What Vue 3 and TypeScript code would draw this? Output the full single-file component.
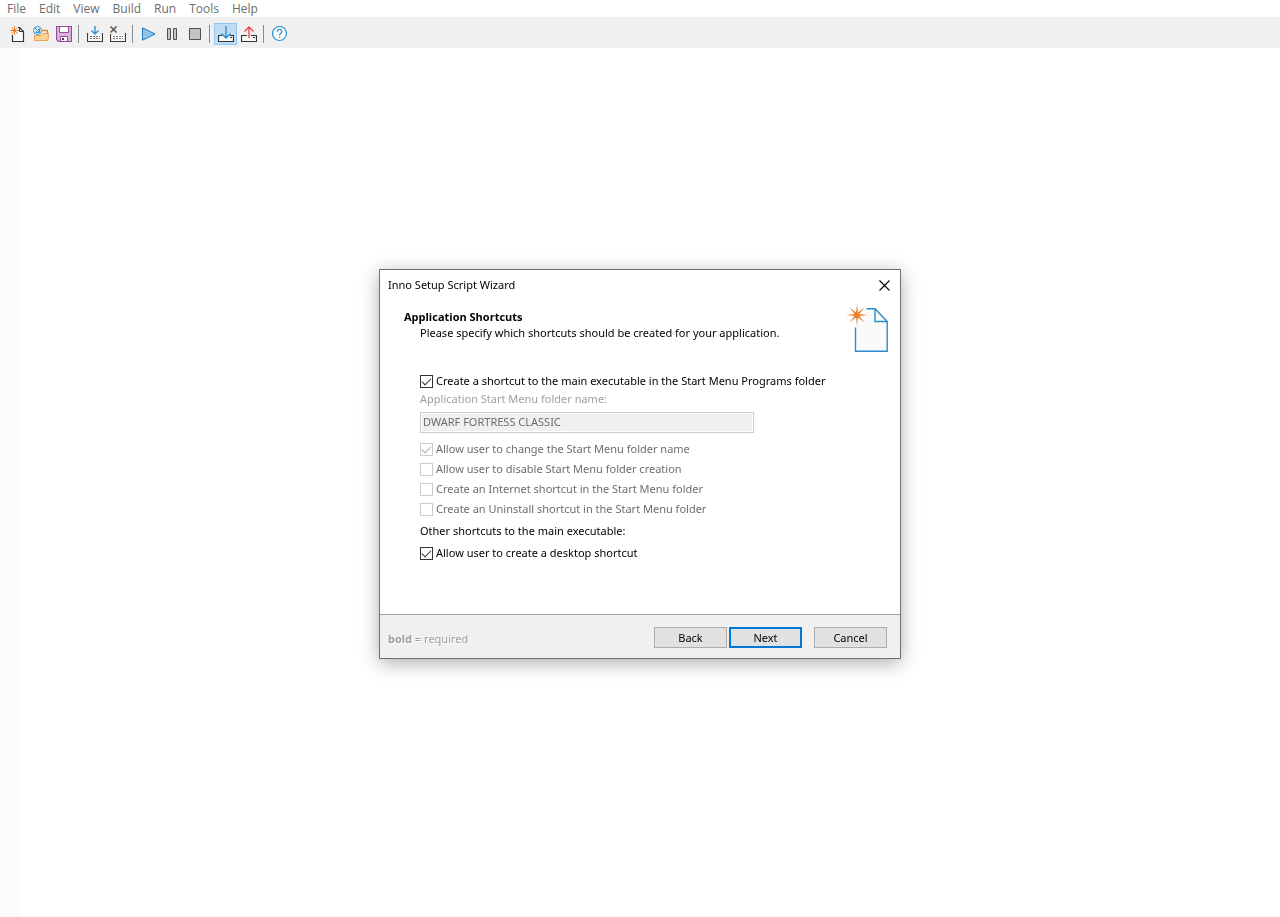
<script setup lang="ts">
import { ref } from 'vue'

const menus: string[] = ['File', 'Edit', 'View', 'Build', 'Run', 'Tools', 'Help']

const createShortcut = ref<boolean>(true)
const folderName = ref<string>('DWARF FORTRESS CLASSIC')
const desktopShortcut = ref<boolean>(true)

interface Option {
  id: string
  label: string
  checked: boolean
}

const folderOptions = ref<Option[]>([
  { id: 'change-name', label: 'Allow user to change the Start Menu folder name', checked: true },
  { id: 'disable-folder', label: 'Allow user to disable Start Menu folder creation', checked: false },
  { id: 'internet', label: 'Create an Internet shortcut in the Start Menu folder', checked: false },
  { id: 'uninstall', label: 'Create an Uninstall shortcut in the Start Menu folder', checked: false },
])
</script>

<template>
  <div class="app">
    <nav class="menubar" aria-label="Main menu">
      <button v-for="m in menus" :key="m" type="button" class="menu">{{ m }}</button>
    </nav>

    <div class="toolbar" role="toolbar" aria-label="Tools">
      <button type="button" class="tool" aria-label="New">
        <svg viewBox="0 0 16 16">
          <path d="M3.5 8.500L7 8V1.500H10L13.500 5V15.500H3.500Z" fill="#fafafa" />
          <path d="M2.500 9V15.500H13.500V5.500L9.500 1.500H8" fill="none" stroke="#333" stroke-width="1.2" />
          <path d="M9.500 1.500V5.500H13.500" fill="none" stroke="#333" />
          <path d="M4.500 0V9M0 4.500H9M1.500 1.500L7.500 7.500M7.500 1.500L1.500 7.500" fill="none" stroke="#e8832f" />
          <circle cx="4.500" cy="4.500" r="1.6" fill="#e8832f" />
        </svg>
      </button>
      <button type="button" class="tool" aria-label="Open">
        <svg viewBox="0 0 16 16">
          <path d="M9 4.500H14.500V9" fill="none" stroke="#e58a33" stroke-width="1.3" />
          <path d="M1.500 9V14.500H15L15.500 7.500H9.500L8 9.500H1.500Z" fill="#fcd391" stroke="#eba34e" />
          <circle cx="4.500" cy="4.500" r="4" fill="#e9f3fa" stroke="#3c91c9" />
          <path d="M2 2L6.300 6.300M6.500 3V6.500H3M2.500 6.500L6.500 2.500" fill="none" stroke="#3c91c9" />
        </svg>
      </button>
      <button type="button" class="tool" aria-label="Save">
        <svg viewBox="0 0 16 16">
          <path d="M0.5 0.5H15.5V15.5H2.5L0.5 13.5Z" fill="#dcb5dc" stroke="#974a98" stroke-width="1.2" />
          <path d="M3.5 0.5H12.5V6.5H3.5Z" fill="#fafafa" stroke="#974a98" />
          <path d="M4.5 10.5H11.5V15.5H4.5Z" fill="#fafafa" stroke="#974a98" />
          <path d="M6 12H8V14H6Z" fill="#444" />
        </svg>
      </button>
      <span class="sep"></span>
      <button type="button" class="tool" aria-label="Compile">
        <svg viewBox="0 0 16 16">
          <path d="M1 8H15V15H1Z" fill="#fafafa" />
          <path d="M0.5 7V15.5H15.5V7" fill="none" stroke="#3a3a3a" stroke-width="1.2" />
          <path d="M3 10.5H13M3 12.5H13" stroke="#777" stroke-dasharray="2 1" />
          <path d="M8 0V8M4.5 4.5L8 8L11.5 4.5" fill="none" stroke="#3292d0" stroke-width="1.4" />
        </svg>
      </button>
      <button type="button" class="tool" aria-label="Stop compile">
        <svg viewBox="0 0 16 16">
          <path d="M1 9H15V15H1Z" fill="#fafafa" />
          <path d="M0.5 8V15.5H15.5V7" fill="none" stroke="#3a3a3a" stroke-width="1.2" />
          <path d="M3 10.5H13M3 12.5H13" stroke="#777" stroke-dasharray="2 1" />
          <path d="M0.500 0.500L6.500 6.500M6.500 0.500L0.500 6.500" stroke="#555" stroke-width="1.5" />
        </svg>
      </button>
      <span class="sep"></span>
      <button type="button" class="tool" aria-label="Run">
        <svg viewBox="0 0 16 16">
          <path d="M1.5 1.8L14 8L1.5 14.2Z" fill="#91c6ec" stroke="#1c79bd" />
        </svg>
      </button>
      <button type="button" class="tool" aria-label="Pause">
        <svg viewBox="0 0 16 16">
          <path d="M3.5 2.5H6.5V13.5H3.5ZM9.5 2.5H12.5V13.5H9.5Z" fill="#c4c4c4" stroke="#505050" />
        </svg>
      </button>
      <button type="button" class="tool" aria-label="Stop">
        <svg viewBox="0 0 16 16">
          <path d="M2.5 2.5H13.5V13.5H2.5Z" fill="#c2c2c2" stroke="#505050" />
        </svg>
      </button>
      <span class="sep"></span>
      <button type="button" class="tool active" aria-pressed="true" aria-label="Target setup">
        <svg viewBox="0 0 16 16">
          <path d="M1 10H15V15H1Z" fill="#fafafa" />
          <path d="M4 9.5H0.5V15.5H15.5V9.5H12" fill="none" stroke="#333" stroke-width="1.2" />
          <path d="M12 11.5H14" stroke="#333" />
          <path d="M8 0V12M3.5 7.5L8 12L12.5 7.5" fill="none" stroke="#2488cb" stroke-width="1.3" />
        </svg>
      </button>
      <button type="button" class="tool" aria-label="Target uninstall">
        <svg viewBox="0 0 16 16">
          <path d="M1 10H15V15H1Z" fill="#fafafa" />
          <path d="M6 9.5H0.5V15.5H15.5V9.5H10" fill="none" stroke="#333" stroke-width="1.2" />
          <path d="M12 11.5H14" stroke="#333" />
          <path d="M8 12V1M3.5 5.5L8 1L12.5 5.5" fill="none" stroke="#ec4343" stroke-width="1.3" />
        </svg>
      </button>
      <span class="sep"></span>
      <button type="button" class="tool" aria-label="Help">
        <svg viewBox="0 0 16 16">
          <circle cx="7.5" cy="7.5" r="7" fill="#fafafa" stroke="#2f93d2" stroke-width="1.2" />
          <path d="M5.3 5.8C5.3 2.6 10 2.8 9.8 5.6C9.7 7.2 7.6 7.4 7.6 9.4" fill="none" stroke="#2f93d2" stroke-width="1.2" />
          <path d="M7 10.8H8.3V12H7Z" fill="#2f93d2" />
        </svg>
      </button>
    </div>

    <main class="editor"><div class="gutter"></div></main>

    <div class="overlay">
      <section class="dialog" role="dialog" aria-labelledby="dialog-title">
        <header class="titlebar">
          <span id="dialog-title">Inno Setup Script Wizard</span>
          <button type="button" class="close" aria-label="Close">
            <svg viewBox="0 0 11 11"><path d="M0.5 0.5L10.5 10.5M10.5 0.5L0.5 10.5" stroke="#000" stroke-width="1.1" /></svg>
          </button>
        </header>

        <div class="intro">
          <div>
            <h1>Application Shortcuts</h1>
            <p>Please specify which shortcuts should be created for your application.</p>
          </div>
          <svg class="page-icon" viewBox="0 0 42 48">
            <path d="M9.500 24L20 12V5H29L41 17V47H9.500Z" fill="#fafafa" />
            <path d="M20.500 4.700H29L41.200 17.500V47.300H9.500V23.500" fill="none" stroke="#2a8aca" stroke-width="1.4" />
            <path d="M29 5V17.500H41" fill="none" stroke="#2a8aca" stroke-width="1.4" />
            <path d="M11 0L12 8.600L18.500 3.500L13.400 10L22 11L13.400 12L18.500 18.500L12 13.400L11 22L10 13.400L3.500 18.500L8.600 12L0 11L8.600 10L3.500 3.500L10 8.600Z" fill="#e98a3c" />
            <circle cx="11" cy="11" r="3" fill="#e8832f" />
          </svg>
        </div>

        <form class="fields" @submit.prevent>
          <label class="check">
            <input v-model="createShortcut" type="checkbox" />
            <span>Create a shortcut to the main executable in the Start Menu Programs folder</span>
          </label>
          <label class="caption" for="folder-name">Application Start Menu folder name:</label>
          <input id="folder-name" v-model="folderName" class="text" type="text" disabled />
          <label v-for="o in folderOptions" :key="o.id" class="check off">
            <input v-model="o.checked" type="checkbox" disabled />
            <span>{{ o.label }}</span>
          </label>
          <p class="group">Other shortcuts to the main executable:</p>
          <label class="check">
            <input v-model="desktopShortcut" type="checkbox" />
            <span>Allow user to create a desktop shortcut</span>
          </label>
        </form>

        <footer class="footer">
          <span class="hint"><b>bold</b> = required</span>
          <button type="button" class="btn">Back</button>
          <button type="button" class="btn primary">Next</button>
          <button type="button" class="btn cancel">Cancel</button>
        </footer>
      </section>
    </div>
  </div>
</template>

<style>
body {
  margin: 0;
  background: #fff;
}
</style>

<style scoped>
.app {
  display: flex;
  flex-direction: column;
  min-height: 100vh;
  font-family: "Noto Sans", "Open Sans", sans-serif;
  font-size: 11px;
  line-height: 16px;
  color: #000;
}
button {
  font: inherit;
  color: inherit;
  padding: 0;
  border: 0;
  background: none;
}
h1,
p {
  margin: 0;
  font-size: 11px;
}
svg {
  display: block;
}
.menubar {
  display: flex;
  gap: 13px;
  height: 17px;
  padding-left: 7px;
  font-family: "Open Sans", sans-serif;
  font-size: 12px;
  line-height: 17px;
  color: #6d6d6d;
}
.toolbar {
  display: flex;
  align-items: flex-start;
  box-sizing: border-box;
  height: 31px;
  padding: 6px 0 0 6px;
  background: #f0f0f0;
}
.tool {
  display: flex;
  align-items: center;
  box-sizing: border-box;
  width: 23px;
  height: 22px;
  padding-left: 4px;
}
.tool svg {
  width: 16px;
  height: 16px;
  flex: none;
}
.tool.active {
  padding-left: 3px;
  border: 1px solid #90c8f6;
  background: #c0dcf3;
}
.sep {
  width: 1px;
  height: 18px;
  margin: 2px 4px 0 3px;
  background: #8a8a8a;
}
.editor {
  display: flex;
  flex: 1;
}
.gutter {
  width: 21px;
  background: #fbfbfa;
}
.overlay {
  position: fixed;
  inset: 0;
  display: flex;
  align-items: center;
  justify-content: center;
  padding-top: 11px;
}
.dialog {
  display: flex;
  flex-direction: column;
  width: 520px;
  border: 1px solid #707070;
  background: #fff;
  box-shadow: 0 4px 18px rgba(0, 0, 0, 0.32);
}
.titlebar {
  display: flex;
  align-items: center;
  justify-content: space-between;
  height: 30px;
  padding: 0 10px 0 8px;
}
.close svg {
  width: 11px;
  height: 11px;
}
.intro {
  display: flex;
  justify-content: space-between;
  padding: 4px 12px 19px 24px;
}
.intro h1 {
  margin-top: 5px;
  font-family: "Open Sans", sans-serif;
}
.intro p {
  padding-left: 16px;
}
.page-icon {
  width: 42px;
  height: 48px;
}
.fields {
  display: flex;
  flex-direction: column;
  align-items: flex-start;
  padding: 0 40px 51px;
}
.check {
  display: flex;
  align-items: center;
  gap: 3px;
  height: 20px;
}
.check input {
  appearance: none;
  box-sizing: border-box;
  width: 13px;
  height: 13px;
  margin: 0;
  border: 1px solid #333;
  background: #fff;
}
.check input:checked::before {
  content: "";
  display: block;
  width: 9px;
  height: 5px;
  margin: 2px 0 0 1px;
  box-sizing: border-box;
  border: solid #333;
  border-width: 0 0 1px 1px;
  transform: rotate(-45deg);
}
.check.off {
  color: #6d6d6d;
}
.check input:disabled {
  border-color: #ccc;
}
.check input:disabled::before {
  border-color: #aaa;
}
.caption {
  color: #a0a0a0;
}
.text {
  box-sizing: border-box;
  width: 334px;
  height: 21px;
  margin: 5px 0 6px;
  padding: 0 2px 2px;
  font: inherit;
  color: #6d6d6d;
  border: 1px solid #ccc;
  outline: 1px solid #fff;
  outline-offset: -2px;
  background: #f0f0f0;
}
.group {
  margin: 4px 0;
}
.footer {
  display: flex;
  align-items: flex-start;
  padding: 12px 13px 10px 8px;
  border-top: 1px solid #a0a0a0;
  background: #f0f0f0;
}
.hint {
  margin: 4px auto 0 0;
  color: #a0a0a0;
  text-shadow: 1px 1px 0 #fff;
}
.btn {
  box-sizing: border-box;
  width: 73px;
  height: 21px;
  line-height: 17px;
  border: 1px solid #adadad;
  background: #e1e1e1;
}
.btn.primary {
  margin-left: 2px;
  border: 2px solid #0078d7;
}
.btn.cancel {
  margin-left: 12px;
}
</style>
